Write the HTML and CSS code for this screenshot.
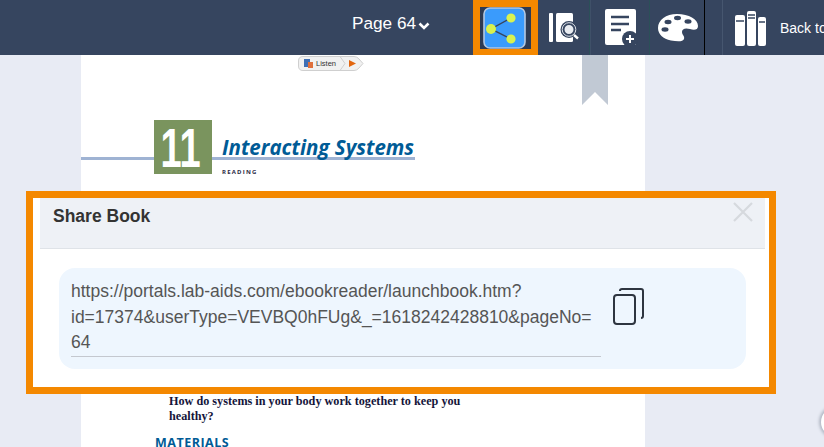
FILE: index.html
```html
<!DOCTYPE html>
<html>
<head>
  <meta charset="UTF-8">
  <meta name="viewport" content="width=device-width, initial-scale=1.0">
  <title>Share Book</title>
  <link rel="stylesheet" href="styles.css">
</head>
<body>
  <header class="topbar">
    <div class="page-select">
      <span>Page 64</span>
      <svg class="chevron" width="12" height="8" viewBox="0 0 12 8"><path d="M1.5 1.5 L6 6 L10.5 1.5" fill="none" stroke="#fff" stroke-width="2.6"/></svg>
    </div>

    <button class="tool tool-share" title="Share">
      <svg width="43" height="42" viewBox="0 0 43 42">
        <rect x="1" y="1" width="41" height="40" rx="6" fill="#3a9bfc" stroke="#b3c8e2" stroke-width="1.6"/>
        <path d="M28 11 L8 22 L28 32" fill="none" stroke="#36455f" stroke-width="1.4"/>
        <circle cx="28" cy="11" r="4.6" fill="#d9f24f"/>
        <circle cx="8" cy="22" r="5" fill="#d9f24f"/>
        <circle cx="28" cy="32" r="4.6" fill="#d9f24f"/>
      </svg>
    </button>

    <button class="tool tool-search" title="Search">
      <svg width="30" height="32" viewBox="0 0 30 32">
        <rect x="0" y="1" width="4" height="29" rx="1" fill="#fff"/>
        <rect x="7" y="1" width="17" height="29" rx="1.5" fill="#fff"/>
        <circle cx="20" cy="17.500" r="8.500" fill="#36455f"/>
        <circle cx="20" cy="17.500" r="5.500" fill="#e9ecf1" stroke="#36455f" stroke-width="2"/>
        <circle cx="20" cy="17.500" r="6.800" fill="none" stroke="#dfe3ea" stroke-width="1"/>
        <path d="M25 23 L29 26.500" stroke="#fff" stroke-width="2.400"/>
      </svg>
    </button>

    <button class="tool tool-note" title="Add note">
      <svg width="33" height="37" viewBox="0 0 33 37">
        <path d="M2 0 H29 Q31 0 31 2 V36 H2 Q0 36 0 34 V2 Q0 0 2 0 Z" fill="#fff"/>
        <path d="M6 8 H24 M6 15 H24 M6 21 H16" stroke="#36455f" stroke-width="2.6"/>
        <circle cx="25" cy="30" r="8" fill="#36455f"/>
        <path d="M25 26 V34 M21 30 H29" stroke="#fff" stroke-width="2"/>
      </svg>
    </button>

    <button class="tool tool-theme" title="Theme">
      <svg width="41" height="28" viewBox="0 0 41 28">
        <path d="M19 0 C31 0 40 5 40 12 C40 16 36 16.500 32 15 C27 13.500 24 15 24 18 C24 21 27 22 26 25 C25 28 19 27.500 13 26.500 C5 25 0 20 0 14 C0 6 8 0 19 0 Z" fill="#fff"/>
        <ellipse cx="19.500" cy="4" rx="3.500" ry="2.200" fill="#36455f"/>
        <ellipse cx="10" cy="8" rx="3.500" ry="2.200" fill="#36455f"/>
        <ellipse cx="30" cy="7.500" rx="3.500" ry="2.200" fill="#36455f"/>
        <ellipse cx="7" cy="15.500" rx="3.500" ry="2.200" fill="#36455f"/>
      </svg>
    </button>

    <a class="back-link" href="#">
      <svg width="31" height="36" viewBox="0 0 31 36">
        <rect x="0" y="5" width="10" height="31" rx="2" fill="#fff"/>
        <rect x="12" y="1" width="9" height="35" rx="2" fill="#fff"/>
        <rect x="23" y="7" width="8" height="29" rx="2" fill="#fff"/>
        <path d="M1 11 H9 M13 5 H20 M13 8 H20 M24 12 H30" stroke="#36455f" stroke-width="1.4"/>
      </svg>
      <span>Back to</span>
    </a>
  </header>

  <main class="reader">
    <article class="book-page">
      <svg class="listen" width="66" height="15" viewBox="0 0 66 15">
        <path d="M5 .5 H56 Q59 .5 61 3 L65 7.500 L61 12 Q59 14.500 56 14.500 H5 Q.5 14.500 .5 10 V5 Q.5 .5 5 .5 Z" fill="#f1f1f1" stroke="#cfcfcf"/>
        <path d="M42 .5 L47 7.500 L42 14.500" fill="none" stroke="#cfcfcf"/>
        <rect x="6" y="3" width="6" height="8" fill="#3f6fb5"/>
        <rect x="10" y="6" width="5" height="6" fill="#e0703c"/>
        <text x="18" y="9.500" class="listen-label">Listen</text>
        <path d="M51 4 L58 7.500 L51 11 Z" fill="#e2660f"/>
      </svg>
      <svg class="bookmark" width="26" height="50" viewBox="0 0 26 50"><path d="M0 0 H26 V50 L13 37 L0 50 Z" fill="#c1c9d4"/></svg>

      <div class="chapter">
        <div class="chapter-rule"></div>
        <div class="chapter-num"><span>11</span></div>
        <div class="chapter-text">
          <h2>Interacting Systems</h2>
          <span>READING</span>
        </div>
      </div>

      <p class="question">How do systems in your body work together to keep you healthy?</p>
      <h3 class="materials">MATERIALS</h3>
    </article>
  </main>

  <div class="scroll-btn"></div>

  <section class="share-modal">
    <div class="modal-header">
      <h2>Share Book</h2>
      <svg class="close" width="20" height="20" viewBox="0 0 20 20"><path d="M1 1 L19 19 M19 1 L1 19" stroke="#d6d9de" stroke-width="2.2"/></svg>
    </div>
    <div class="modal-body">
      <div class="share-box">
        <div class="share-url">https://portals.lab-aids.com/ebookreader/launchbook.htm?id=17374&amp;userType=VEVBQ0hFUg&amp;_=1618242428810&amp;pageNo=64</div>
        <svg class="copy" width="32" height="38" viewBox="0 0 32 38">
          <path d="M8 3 V2.500 Q8 1 10 1 H29 Q31 1 31 3 V28 Q31 30 29 30" fill="none" stroke="#2e3540" stroke-width="2"/>
          <rect x="2" y="7" width="21" height="29" rx="3" fill="none" stroke="#2e3540" stroke-width="2"/>
        </svg>
      </div>
    </div>
  </section>
</body>
</html>
```

FILE: styles.css
```css
html, body {
  margin: 0;
  height: 447px;
  overflow: hidden;
}

body {
  font-family: "Liberation Sans", Arial, sans-serif;
  background-color: #e8ebf4;
  color: #333;
}

/* Top bar */
.topbar {
  display: flex;
  align-items: stretch;
  height: 55px;
  background-color: #36455f;
  color: white;
}

.topbar > * {
  flex-shrink: 0;
}

.page-select {
  display: flex;
  align-items: center;
  gap: 2px;
  width: 121px;
  margin-left: 352px;
  font-size: 17.200px;
  padding-bottom: 9px;
  box-sizing: border-box;
}

.chevron {
  margin-top: 6px;
}

.tool {
  display: flex;
  align-items: center;
  justify-content: center;
  background: none;
  border: none;
  padding: 0;
  box-sizing: border-box;
}

.tool-share {
  width: 65px;
  border: 7px solid #f48800;
  border-width: 7px 7px 6px;
  background-color: #2d3a52;
  padding-right: 2px;
}

.tool-search {
  width: 52px;
  border-right: 1px solid #2b5058;
}

.tool-note {
  width: 60px;
  padding-bottom: 1px;
  border-left: 1px solid #3f5068;
  border-right: 1px solid #2b5058;
  padding-left: 2px;
}

.tool-theme {
  width: 55px;
  padding-left: 3px;
  border-right: 1px solid #000;
}

.back-link {
  display: flex;
  align-items: center;
  gap: 14px;
  margin-left: 17px;
  padding-left: 12px;
  border-left: 1px solid #46566f;
  color: white;
  text-decoration: none;
  font-size: 14px;
  white-space: nowrap;
}

.back-link span {
  margin-top: 1px;
}

/* Book page */
.reader {
  height: 392px;
  overflow: hidden;
  padding-left: 81px;
}

.book-page {
  position: relative;
  width: 564px;
  height: 392px;
  background-color: white;
  overflow: hidden;
}

.listen {
  display: block;
  margin-left: 217px;
  padding-top: 1px;
}

.listen-label {
  font-size: 7.5px;
  fill: #333;
  font-family: "Liberation Sans", Arial, sans-serif;
}

.bookmark {
  position: absolute;
  top: 0;
  left: 501px;
}

.chapter {
  position: relative;
  display: flex;
  margin-top: 49px;
  margin-left: 73px;
  height: 54px;
}

.chapter-rule {
  position: absolute;
  left: -73px;
  top: 37px;
  width: 334px;
  height: 2.500px;
  background-color: #9fb3d3;
}

.chapter-num {
  position: relative;
  display: flex;
  justify-content: center;
  width: 58px;
  height: 54px;
  background-color: #7a945e;
  color: white;
  font-weight: bold;
  font-size: 56px;
  line-height: 55px;
}

.chapter-num span {
  display: block;
  transform: translateX(-2px) scaleX(.68);
}

.chapter-text {
  position: relative;
  margin-left: 10px;
}

.chapter-text h2 {
  margin: 14px 0 0;
  height: 23px;
  color: #005b96;
  font-family: "Open Sans", sans-serif;
  font-style: italic;
  font-weight: 700;
  font-size: 20.500px;
  line-height: 26px;
  white-space: nowrap;
}

.chapter-text span {
  display: block;
  margin-top: 11px;
  font-family: "Open Sans", sans-serif;
  font-weight: 700;
  font-size: 6px;
  line-height: 8px;
  letter-spacing: 1.200px;
  color: #2a2a44;
}

.question {
  width: 310px;
  margin: 220px 0 0 88px;
  font-family: "Liberation Serif", serif;
  font-weight: bold;
  font-size: 12.200px;
  line-height: 15px;
  color: #14143a;
}

.materials {
  margin: 12px 0 0 74px;
  font-family: "Open Sans", sans-serif;
  font-weight: 700;
  font-size: 12.500px;
  line-height: 14px;
  letter-spacing: .5px;
  color: #005b96;
}

.scroll-btn {
  position: absolute;
  left: 821px;
  top: 407px;
  width: 30px;
  height: 30px;
  border-radius: 50%;
  background-color: white;
  box-shadow: 0 0 3px 2px #b4bac6;
}

/* Share dialog */
.share-modal {
  position: absolute;
  left: 26px;
  top: 191px;
  width: 750px;
  height: 203px;
  box-sizing: border-box;
  border: 7px solid #f48800;
  background-color: white;
  padding: 0 4px 0 7px;
}

.modal-header {
  display: flex;
  justify-content: space-between;
  height: 50px;
  background-color: #eef1f6;
  border-bottom: 1px solid #dfe3e8;
  padding: 0 12px 0 13px;
}

.modal-header h2 {
  margin: 8px 0 0;
  font-size: 17.500px;
  line-height: 20px;
}

.close {
  margin-top: 4px;
}

.modal-body {
  padding: 19px 19px 0;
}

.share-box {
  display: flex;
  align-items: flex-start;
  height: 101px;
  box-sizing: border-box;
  padding: 11px 0 0 12px;
  background-color: #eef6fe;
  border-radius: 16px;
}

.share-url {
  width: 530px;
  height: 77px;
  border-bottom: 1px solid #c4c8cf;
  font-size: 17.500px;
  line-height: 25.500px;
  color: #555;
  overflow-wrap: anywhere;
}

.copy {
  margin: 9px 0 0 11px;
}
```
